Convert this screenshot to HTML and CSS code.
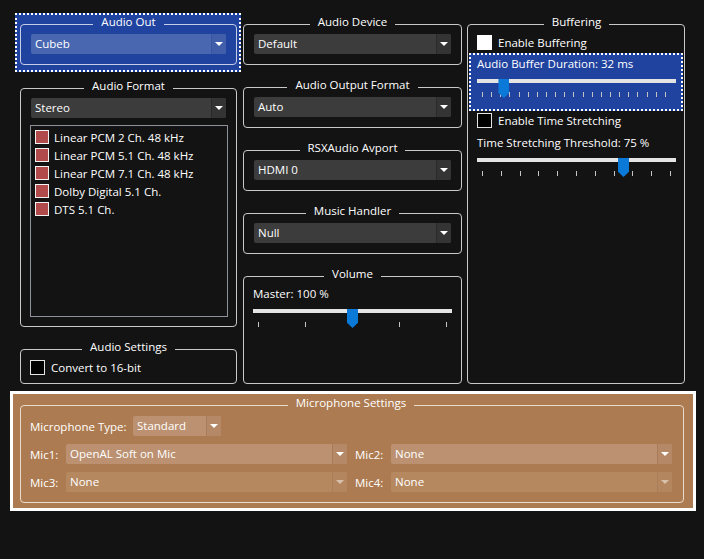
FILE: index.html
```html
<!DOCTYPE html>
<html>
<head>
<meta charset="utf-8">
<link rel="stylesheet" href="styles.css">
</head>
<body>
<div class="top">
  <div class="col">
    <div class="focus focus-out">
      <fieldset class="group g-blue">
        <legend>Audio Out</legend>
        <div class="combo combo-blue"><span class="val">Cubeb</span><span class="btn"><i class="arrow"></i></span></div>
      </fieldset>
    </div>
    <fieldset class="group g-format">
      <legend>Audio Format</legend>
      <div class="combo"><span class="val">Stereo</span><span class="btn"><i class="arrow"></i></span></div>
      <ul class="list">
        <li><span class="box red"></span>Linear PCM 2 Ch. 48 kHz</li>
        <li><span class="box red"></span>Linear PCM 5.1 Ch. 48 kHz</li>
        <li><span class="box red"></span>Linear PCM 7.1 Ch. 48 kHz</li>
        <li><span class="box red"></span>Dolby Digital 5.1 Ch.</li>
        <li><span class="box red"></span>DTS 5.1 Ch.</li>
      </ul>
    </fieldset>
    <fieldset class="group g-settings">
      <legend>Audio Settings</legend>
      <label class="check"><span class="cb"></span>Convert to 16-bit</label>
    </fieldset>
  </div>

  <div class="col col-mid">
    <fieldset class="group">
      <legend>Audio Device</legend>
      <div class="combo"><span class="val">Default</span><span class="btn"><i class="arrow"></i></span></div>
    </fieldset>
    <fieldset class="group">
      <legend>Audio Output Format</legend>
      <div class="combo"><span class="val">Auto</span><span class="btn"><i class="arrow"></i></span></div>
    </fieldset>
    <fieldset class="group">
      <legend>RSXAudio Avport</legend>
      <div class="combo"><span class="val">HDMI 0</span><span class="btn"><i class="arrow"></i></span></div>
    </fieldset>
    <fieldset class="group">
      <legend>Music Handler</legend>
      <div class="combo"><span class="val">Null</span><span class="btn"><i class="arrow"></i></span></div>
    </fieldset>
    <fieldset class="group g-volume">
      <legend>Volume</legend>
      <div class="lbl">Master: 100 %</div>
      <div class="slider">
        <div class="track"></div>
        <div class="ticks"><i></i><i></i><i></i><i></i><i></i></div>
        <span class="thumb" style="left: calc((100% - 11px) * 0.5)"></span>
      </div>
    </fieldset>
  </div>

  <div class="col col-right">
    <fieldset class="group g-buffer">
      <legend>Buffering</legend>
      <label class="check"><span class="cb on"></span>Enable Buffering</label>
      <div class="focus focus-buf">
        <div class="lbl">Audio Buffer Duration: 32 ms</div>
        <div class="slider">
          <div class="track"></div>
          <div class="ticks ticks-fine"><i></i><i></i><i></i><i></i><i></i><i></i><i></i><i></i><i></i><i></i><i></i><i></i><i></i><i></i><i></i><i></i><i></i><i></i><i></i><i></i><i></i></div>
          <span class="thumb" style="left: calc((100% - 11px) * 0.114)"></span>
        </div>
      </div>
      <label class="check check-ts"><span class="cb"></span>Enable Time Stretching</label>
      <div class="lbl lbl-ts">Time Stretching Threshold: 75 %</div>
      <div class="slider">
        <div class="track"></div>
        <div class="ticks"><i></i><i></i><i></i><i></i><i></i><i></i><i></i><i></i><i></i><i></i><i></i></div>
        <span class="thumb" style="left: calc((100% - 11px) * 0.75)"></span>
      </div>
    </fieldset>
  </div>
</div>

<div class="mic">
  <fieldset class="group g-mic">
    <legend>Microphone Settings</legend>
    <div class="mic-type">
      <span class="mic-type-lbl">Microphone Type:</span>
      <div class="combo combo-brown combo-type"><span class="val">Standard</span><span class="btn"><i class="arrow"></i></span></div>
    </div>
    <div class="mic-grid">
      <div class="pair"><span class="plbl">Mic1:</span><div class="combo combo-brown"><span class="val">OpenAL Soft on Mic</span><span class="btn"><i class="arrow"></i></span></div></div>
      <div class="pair"><span class="plbl">Mic2:</span><div class="combo combo-brown"><span class="val">None</span><span class="btn"><i class="arrow"></i></span></div></div>
      <div class="pair"><span class="plbl">Mic3:</span><div class="combo combo-brown disabled"><span class="val">None</span><span class="btn"><i class="arrow"></i></span></div></div>
      <div class="pair"><span class="plbl">Mic4:</span><div class="combo combo-brown disabled"><span class="val">None</span><span class="btn"><i class="arrow"></i></span></div></div>
    </div>
  </fieldset>
</div>
</body>
</html>
```
FILE: styles.css
```css
* { box-sizing: border-box; }

body {
  margin: 0;
  width: 704px;
  height: 559px;
  overflow: hidden;
  background: #131313;
  color: #ffffff;
  font-family: "Open Sans", "Noto Sans", sans-serif;
  font-size: 11.5px;
}

.top {
  display: grid;
  grid-template-columns: 217px 219px 217px;
  column-gap: 6px;
  padding: 13px 0 0 20px;
}

.col {
  display: flex;
  flex-direction: column;
}

.col-mid, .col-right { padding-top: 2px; }
.col-right { margin-left: -1px; }
.col-mid .group + .group { margin-top: 13px; }

/* group boxes */
.group {
  margin: 0;
  min-width: 0;
  border: 1px solid #c9c9c9;
  border-radius: 4px;
  padding: 0 10px 10px;
}

.group legend {
  margin: 0 auto;
  padding: 0 8px 5px;
  line-height: 14px;
  white-space: nowrap;
}

/* focus frames */
.focus {
  border: 2px dotted #ffffff;
  background: #2143a0;
}

.focus-out {
  margin: 0 -4px 0 -5px;
  padding: 0 2px 5px 3px;
}

.g-blue { border-color: #c6cde6; }

/* combo boxes */
.combo {
  display: flex;
  height: 20px;
  background: #3c3c3c;
  border-radius: 2px;
  overflow: hidden;
}

.combo .val {
  flex: 1;
  padding-left: 4px;
  line-height: 20px;
  white-space: nowrap;
}

.combo .btn {
  width: 15px;
  display: flex;
  align-items: center;
  justify-content: center;
  background: #343434;
  border-left: 1px solid #2a2a2a;
}

.arrow {
  width: 0;
  height: 0;
  border-left: 4px solid transparent;
  border-right: 4px solid transparent;
  border-top: 4px solid #ffffff;
}

.combo-blue { background: #4967b1; }
.combo-blue .btn { background: #405ea9; border-left-color: #3a56a0; }

/* audio format */
.g-format { margin-top: 7px; padding-bottom: 9px; }

.list {
  list-style: none;
  margin: 7px -2px 0 -1px;
  padding: 2px 4px;
  height: 192px;
  border: 1px solid #8d9199;
}

.list li {
  display: flex;
  align-items: center;
  gap: 5px;
  height: 18px;
  white-space: nowrap;
}

.box {
  width: 14px;
  height: 14px;
  flex: none;
  border: 1px solid #f2f2f2;
}

.box.red { background: #b14a4b; }

/* check boxes */
.check {
  display: flex;
  align-items: center;
  gap: 6px;
  height: 17px;
  white-space: nowrap;
}

.cb {
  width: 15px;
  height: 15px;
  flex: none;
  border: 1px solid #e4e4e4;
  background: #000000;
}

.cb.on { background: #ffffff; border-color: #ffffff; }

.g-settings { margin-top: 13px; padding: 0 9px 8px; }
.g-settings .check { height: 16px; }

/* volume */
.g-volume { flex: 1; padding: 0 9px; }

.lbl {
  line-height: 16px;
  white-space: nowrap;
}

.slider {
  position: relative;
  height: 25px;
  margin-top: 6px;
}

.track {
  margin-top: 7px;
  height: 4px;
  background: #e4e4e4;
}

.ticks {
  display: flex;
  justify-content: space-between;
  margin-top: 9px;
  padding: 0 5px;
}

.ticks i {
  width: 1px;
  height: 5px;
  background: #c4c4c4;
}

.ticks-fine { padding: 0 10px 0 5px; }

.thumb {
  position: absolute;
  top: 0;
  width: 11px;
  height: 19px;
  background: #0a79d8;
  clip-path: polygon(0 0, 100% 0, 100% 72%, 50% 100%, 0 72%);
}

/* buffering */
.g-buffer { flex: 1; padding: 0 8px 0 9px; }

.focus-buf {
  margin: 2px -7px 0 -8px;
  padding: 1px 5px 5px 6px;
}

.check-ts { margin-top: 1px; }
.lbl-ts { margin-top: 6px; }
.g-buffer .lbl-ts + .slider { margin-top: 5px; }

/* microphone */
.mic {
  margin: 7px 8px 0 10px;
  border: 3px solid #ffffff;
  background: #ad7b51;
  padding: 2px 9px 5px 7px;
}

.g-mic {
  border-color: #eadccd;
  padding: 1px 11px 10px 9px;
}

.mic-type {
  display: flex;
  align-items: center;
}

.mic-type-lbl {
  width: 103px;
  white-space: nowrap;
}

.combo-brown { background: #bb9171; }
.combo-brown .btn { background: #b58967; border-left-color: #a87c5a; }

.combo-type { width: 88px; }

.combo-brown.disabled { background: #b5885f; }
.combo-brown.disabled .btn { background: #b38660; border-left-color: #aa7d58; }
.combo-brown.disabled .arrow { border-top-color: #d8c0aa; }

.mic-grid {
  display: grid;
  grid-template-columns: 1fr 1fr;
  column-gap: 8px;
  row-gap: 8px;
  margin-top: 8px;
}

.pair {
  display: flex;
  align-items: center;
}

.plbl {
  width: 36px;
  flex: none;
}

.pair .combo { flex: 1; }
```
